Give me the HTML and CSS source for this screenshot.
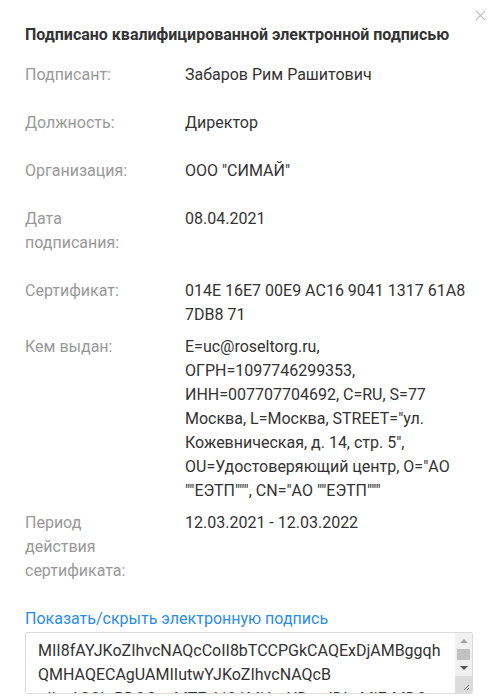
FILE: index.html
```html
<!DOCTYPE html>
<html>
<head>
    <title>Подпись</title>
    <link rel="stylesheet" href="styles.css">
</head>
<body>
    <!-- Signature modal -->
    <div class="sign-modal">
        <span class="close-button">
            <svg class="close-icon" viewBox="0 0 12 12">
                <path d="M1 1L11 11M11 1L1 11" />
            </svg>
        </span>
        <div class="sign-title">Подписано квалифицированной электронной подписью</div>

        <div class="sign-row">
            <div class="sign-label">Подписант:</div>
            <div class="sign-value">Забаров Рим Рашитович</div>
        </div>
        <div class="sign-row">
            <div class="sign-label">Должность:</div>
            <div class="sign-value">Директор</div>
        </div>
        <div class="sign-row">
            <div class="sign-label">Организация:</div>
            <div class="sign-value">ООО "СИМАЙ"</div>
        </div>
        <div class="sign-row">
            <div class="sign-label">Дата подписания:</div>
            <div class="sign-value">08.04.2021</div>
        </div>
        <div class="sign-row">
            <div class="sign-label">Сертификат:</div>
            <div class="sign-value">014E 16E7 00E9 AC16 9041 1317 61A8 7DB8 71</div>
        </div>
        <div class="sign-row">
            <div class="sign-label">Кем выдан:</div>
            <div class="sign-value">E=uc@roseltorg.ru, ОГРН=1097746299353, ИНН=007707704692, C=RU, S=77 Москва, L=Москва, STREET="ул. Кожевническая, д. 14, стр. 5", OU=Удостоверяющий центр, O="АО ""ЕЭТП""", CN="АО ""ЕЭТП"""</div>
        </div>
        <div class="sign-row">
            <div class="sign-label">Период действия сертификата:</div>
            <div class="sign-value">12.03.2021 - 12.03.2022</div>
        </div>

        <a class="sign-toggle" href="#">Показать/скрыть электронную подпись</a>

        <!-- Signature box with scrollbar -->
        <div class="sign-box">
            <textarea class="sign-data" readonly>MII8fAYJKoZIhvcNAQcCoII8bTCCPGkCAQExDjAMBggqhQMHAQECAgUAMIIutwYJKoZIhvcNAQcB
oIIutASCLrBDOGcgMTEyLjQ1MjAwNDcwIDIwMjEtMDQtMDggMTI6MzQ6NTkKMjAyMS0wNC0wOA==</textarea>
            <div class="sign-scroll">
                <div class="scroll-btn"><span class="arrow-up"></span></div>
                <div class="scroll-thumb"></div>
                <div class="scroll-btn"><span class="arrow-down"></span></div>
                <div class="scroll-corner">
                    <svg class="grip-icon" viewBox="0 0 17 17">
                        <path d="M14 9L9 14M14 12L12 14" />
                    </svg>
                </div>
            </div>
        </div>
    </div>
</body>
</html>
```

FILE: styles.css
```css
body {
    margin: 0;
    font-family: Roboto, "Noto Sans", Arial, sans-serif;
    background: white;
}

/* Modal */
.sign-modal {
    position: relative;
    width: 448px;
    padding: 25px 22px 0 25px;
}

.close-button {
    position: absolute;
    right: 9px;
    top: 10px;
    width: 11px;
    height: 11px;
    cursor: pointer;
}

.close-icon {
    width: 11px;
    height: 11px;
    stroke: #bbb;
    stroke-width: 1.3;
    fill: none;
    display: block;
}

.sign-title {
    font-size: 16px;
    font-weight: bold;
    color: #333;
    line-height: 20px;
    margin-bottom: 18px;
}

/* Rows */
.sign-row {
    display: flex;
    margin-bottom: 8px;
    font-size: 16px;
    line-height: 24px;
}

.sign-label {
    width: 120px;
    margin-right: 40px;
    flex-shrink: 0;
    padding-bottom: 16px;
    color: #999;
}

.sign-value {
    flex: 1;
    color: #333;
}

/* Signature data */
.sign-toggle {
    display: block;
    font-size: 16px;
    line-height: 24px;
    color: #2a8cf0;
    text-decoration: none;
    margin-bottom: 1px;
}

.sign-box {
    display: flex;
    box-sizing: border-box;
    width: 448px;
    height: 62px;
    border: 1px solid #ddd;
    border-radius: 2px;
    overflow: hidden;
}

.sign-data {
    flex: 1;
    height: 60px;
    box-sizing: border-box;
    padding: 6px 12px 0;
    border: none;
    margin: 0;
    font-family: Roboto, "Noto Sans", Arial, sans-serif;
    font-size: 16px;
    line-height: 24px;
    color: #333;
    overflow: hidden;
    resize: none;
    outline: none;
}

/* Scrollbar */
.sign-scroll {
    width: 17px;
    display: flex;
    flex-direction: column;
    background-color: #f1f1f1;
}

.scroll-btn {
    height: 16px;
    display: flex;
    align-items: center;
    justify-content: center;
}

.arrow-up {
    border-left: 4px solid transparent;
    border-right: 4px solid transparent;
    border-bottom: 4px solid #a3a3a3;
}

.arrow-down {
    border-left: 4px solid transparent;
    border-right: 4px solid transparent;
    border-top: 4px solid #505050;
}

.scroll-thumb {
    height: 11px;
    margin: 0 2px;
    background-color: #c1c1c1;
}

.scroll-corner {
    height: 17px;
    background-color: #dcdcdc;
}

.grip-icon {
    width: 17px;
    height: 17px;
    display: block;
    stroke: #777;
    stroke-width: 1;
    fill: none;
}
```
